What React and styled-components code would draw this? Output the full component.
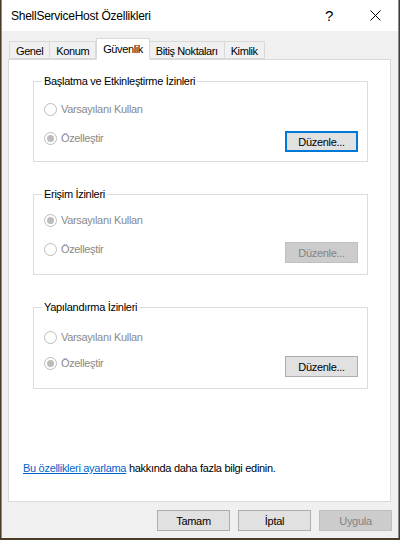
import React from 'react'
import styled, { createGlobalStyle } from 'styled-components'

const GlobalStyle = createGlobalStyle`
  html, body {
    margin: 0;
    padding: 0;
    background: #4a3d28;
  }
  body {
    font-family: "Liberation Sans", Arial, sans-serif;
  }
`

const Window = styled.div`
  width: 396px;
  height: 538px;
  margin-left: 1px;
  border-left: 1px solid #8c8c8c;
  border-right: 1px solid #8c8c8c;
  background: #f0f0f0;
  display: flex;
  flex-direction: column;
`

const TitleBar = styled.div`
  height: 31px;
  background: #fff;
  display: flex;
  align-items: center;
  padding-left: 9px;
  font-size: 12px;
  letter-spacing: -0.25px;
  color: #000;
`

const Title = styled.span`
  flex: 1;
`

const TitleButton = styled.div`
  width: 46px;
  height: 31px;
  display: flex;
  align-items: center;
  justify-content: center;
  font-size: 15px;
  color: #000;
`

const Body = styled.div`
  flex: 1;
  display: flex;
  flex-direction: column;
  padding: 6px 6px 0 6px;
`

const TabRow = styled.div`
  display: flex;
  align-items: flex-end;
  height: 22px;
  padding-left: 1px;
  position: relative;
  z-index: 1;
`

const Tab = styled.div`
  height: ${p => (p.active ? '22px' : '18px')};
  box-sizing: border-box;
  border: 1px solid #d9d9d9;
  border-bottom: ${p => (p.active ? '1px solid #fff' : '1px solid #d9d9d9')};
  border-left-width: ${p => (p.first || p.active ? '1px' : '0')};
  background: ${p => (p.active ? '#fff' : '#f0f0f0')};
  margin-bottom: ${p => (p.active ? '-1px' : '0')};
  padding: 0 6px;
  display: flex;
  align-items: center;
  font-size: 11px;
  letter-spacing: -0.4px;
  color: #000;
  padding-top: ${p => (p.active ? '0' : '1px')};
`

const Panel = styled.div`
  height: 443px;
  box-sizing: border-box;
  margin-right: 1px;
  background: #fff;
  border: 1px solid #d9d9d9;
  display: flex;
  flex-direction: column;
  padding: 14px 22px 27px 24px;
`

const Group = styled.fieldset`
  margin: ${p => p.gap}px 0 0 0;
  padding: ${p => p.top}px 9px ${p => p.bottom}px 10px;
  border: 1px solid #dcdcdc;
  min-inline-size: 0;
`

const Legend = styled.legend`
  padding: 0 2px;
  margin-left: -2px;
  font-size: 11px;
  letter-spacing: -0.3px;
  line-height: 15px;
  color: #000;
`

const Row = styled.div`
  display: flex;
  align-items: flex-start;
  justify-content: space-between;
  margin-top: ${p => p.gap || 0}px;
`

const Radio = styled.label`
  display: flex;
  align-items: center;
  height: 20px;
  gap: 4px;
  font-size: 11px;
  letter-spacing: -0.35px;
  color: #8a8a8a;
`

const Circle = styled.span`
  width: 13px;
  height: 13px;
  box-sizing: border-box;
  border-radius: 50%;
  border: 1px solid #bcbcbc;
  background: #fff;
  display: flex;
  align-items: center;
  justify-content: center;

  &::after {
    content: '';
    width: 7px;
    height: 7px;
    border-radius: 50%;
    background: ${p => (p.checked ? '#bcbcbc' : 'transparent')};
  }
`

const Button = styled.button`
  width: 73px;
  height: 21px;
  box-sizing: border-box;
  margin-top: ${p => p.top || 0}px;
  background: ${p => (p.disabled ? '#cccccc' : '#e1e1e1')};
  border: ${p => (p.focused ? '2px solid #0078d7' : p.disabled ? '1px solid #bfbfbf' : '1px solid #adadad')};
  font-family: "Liberation Sans", Arial, sans-serif;
  font-size: 11px;
  letter-spacing: -0.3px;
  color: ${p => (p.disabled ? '#838383' : '#000')};
  padding: 0;
`

const LinkLine = styled.div`
  margin-top: auto;
  margin-left: -10px;
  font-size: 11px;
  letter-spacing: -0.3px;
  color: #000;
`

const Link = styled.a`
  color: #0066cc;
  text-decoration: underline;
`

const Footer = styled.div`
  display: flex;
  justify-content: flex-end;
  gap: 8px;
  padding-top: 8px;
`

const tabs = ['Genel', 'Konum', 'Güvenlik', 'Bitiş Noktaları', 'Kimlik']

const groups = [
  { title: 'Başlatma ve Etkinleştirme İzinleri', choice: 1, gap: 0, top: 10, rowGap: 9, bottom: 9, focused: true },
  { title: 'Erişim İzinleri', choice: 0, gap: 25, top: 8, rowGap: 9, bottom: 11, disabled: true },
  { title: 'Yapılandırma İzinleri', choice: 1, gap: 25, top: 12, rowGap: 6, bottom: 11 }
]

const PermissionGroup = ({ title, choice, gap, top, rowGap, bottom, focused, disabled }) => (
  <Group gap={gap} top={top} bottom={bottom}>
    <Legend>{title}</Legend>
    <Row>
      <Radio>
        <Circle checked={choice === 0} />
        Varsayılanı Kullan
      </Radio>
    </Row>
    <Row gap={rowGap}>
      <Radio>
        <Circle checked={choice === 1} />
        Özelleştir
      </Radio>
      <Button top={3} focused={focused} disabled={disabled}>Düzenle...</Button>
    </Row>
  </Group>
)

export default function App() {
  return (
    <>
      <GlobalStyle />
      <Window>
        <TitleBar>
          <Title>ShellServiceHost Özellikleri</Title>
          <TitleButton>?</TitleButton>
          <TitleButton>
            <svg width="11" height="11" viewBox="0 0 11 11">
              <path d="M0.5 0.5L10.5 10.5M10.5 0.5L0.5 10.5" stroke="#000" strokeWidth="1" />
            </svg>
          </TitleButton>
        </TitleBar>
        <Body>
          <TabRow>
            {tabs.map((t, i) => (
              <Tab key={t} first={i === 0} active={t === 'Güvenlik'}>{t}</Tab>
            ))}
          </TabRow>
          <Panel>
            {groups.map(g => <PermissionGroup key={g.title} {...g} />)}
            <LinkLine>
              <Link>Bu özellikleri ayarlama</Link> hakkında daha fazla bilgi edinin.
            </LinkLine>
          </Panel>
          <Footer>
            <Button>Tamam</Button>
            <Button>İptal</Button>
            <Button disabled>Uygula</Button>
          </Footer>
        </Body>
      </Window>
    </>
  )
}
